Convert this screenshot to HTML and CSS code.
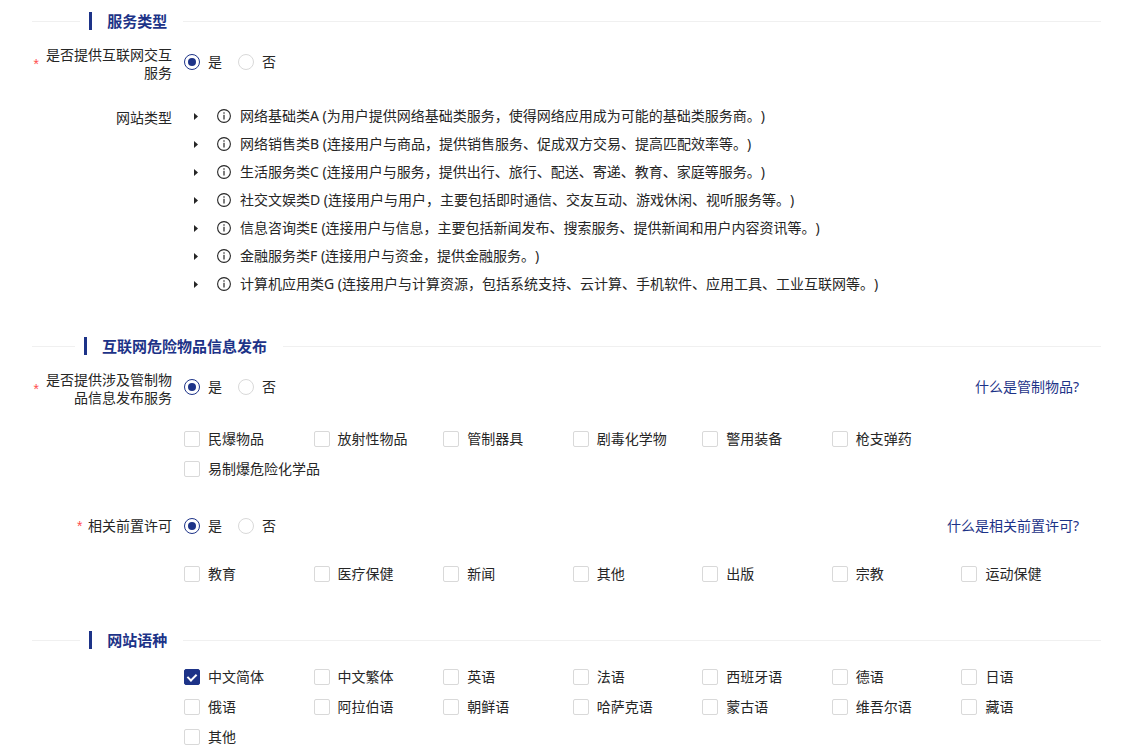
FILE: index.html
```html
<!DOCTYPE html>
<html lang="zh-CN">
<head>
  <meta charset="UTF-8">
  <meta name="viewport" content="width=device-width, initial-scale=1">
  <title>服务类型</title>
  <link rel="stylesheet" href="styles.css">
</head>
<body>
  <svg class="sprite" aria-hidden="true">
    <symbol id="caret" viewBox="0 0 4 7"><path d="M0 0 L4 3.5 L0 7 Z"/></symbol>
    <symbol id="info" viewBox="0 0 14 14">
      <circle cx="7" cy="7" r="6.4" fill="none" stroke="currentColor" stroke-width="1.1"/>
      <rect x="6.4" y="5.8" width="1.2" height="4.7"/>
      <circle cx="7" cy="4" r="0.8"/>
    </symbol>
  </svg>

  <form class="form">
    <section class="section">
      <h2 class="divider"><span class="divider-text">服务类型</span></h2>
      <div class="form-item" role="radiogroup" aria-labelledby="interactive-label">
        <div class="form-label" id="interactive-label"><span class="required">*</span><span>是否提供互联网交互服务</span></div>
        <div class="form-control">
          <label class="option"><input type="radio" name="interactive" checked>是</label>
          <label class="option"><input type="radio" name="interactive">否</label>
        </div>
      </div>
      <div class="form-item">
        <div class="form-label" id="type-label"><span>网站类型</span></div>
        <ul class="tree" aria-labelledby="type-label">
          <li><button type="button" class="switcher" aria-label="展开"><svg class="caret"><use href="#caret"/></svg></button><svg class="info"><use href="#info"/></svg><span>网络基础类A (为用户提供网络基础类服务，使得网络应用成为可能的基础类服务商。)</span></li>
          <li><button type="button" class="switcher" aria-label="展开"><svg class="caret"><use href="#caret"/></svg></button><svg class="info"><use href="#info"/></svg><span>网络销售类B (连接用户与商品，提供销售服务、促成双方交易、提高匹配效率等。)</span></li>
          <li><button type="button" class="switcher" aria-label="展开"><svg class="caret"><use href="#caret"/></svg></button><svg class="info"><use href="#info"/></svg><span>生活服务类C (连接用户与服务，提供出行、旅行、配送、寄递、教育、家庭等服务。)</span></li>
          <li><button type="button" class="switcher" aria-label="展开"><svg class="caret"><use href="#caret"/></svg></button><svg class="info"><use href="#info"/></svg><span>社交文娱类D (连接用户与用户，主要包括即时通信、交友互动、游戏休闲、视听服务等。)</span></li>
          <li><button type="button" class="switcher" aria-label="展开"><svg class="caret"><use href="#caret"/></svg></button><svg class="info"><use href="#info"/></svg><span>信息咨询类E (连接用户与信息，主要包括新闻发布、搜索服务、提供新闻和用户内容资讯等。)</span></li>
          <li><button type="button" class="switcher" aria-label="展开"><svg class="caret"><use href="#caret"/></svg></button><svg class="info"><use href="#info"/></svg><span>金融服务类F (连接用户与资金，提供金融服务。)</span></li>
          <li><button type="button" class="switcher" aria-label="展开"><svg class="caret"><use href="#caret"/></svg></button><svg class="info"><use href="#info"/></svg><span>计算机应用类G (连接用户与计算资源，包括系统支持、云计算、手机软件、应用工具、工业互联网等。)</span></li>
        </ul>
      </div>
    </section>

    <section class="section">
      <h2 class="divider"><span class="divider-text">互联网危险物品信息发布</span></h2>
      <div class="form-item" role="radiogroup" aria-labelledby="controlled-label">
        <div class="form-label" id="controlled-label"><span class="required">*</span><span>是否提供涉及管制物品信息发布服务</span></div>
        <div class="form-control">
          <label class="option"><input type="radio" name="controlled" checked>是</label>
          <label class="option"><input type="radio" name="controlled">否</label>
          <a href="#" class="help">什么是管制物品?</a>
        </div>
      </div>
      <div class="check-group">
        <label class="option"><input type="checkbox">民爆物品</label>
        <label class="option"><input type="checkbox">放射性物品</label>
        <label class="option"><input type="checkbox">管制器具</label>
        <label class="option"><input type="checkbox">剧毒化学物</label>
        <label class="option"><input type="checkbox">警用装备</label>
        <label class="option"><input type="checkbox">枪支弹药</label>
        <label class="option wide"><input type="checkbox">易制爆危险化学品</label>
      </div>
      <div class="form-item" role="radiogroup" aria-labelledby="permit-label">
        <div class="form-label" id="permit-label"><span class="required">*</span><span>相关前置许可</span></div>
        <div class="form-control">
          <label class="option"><input type="radio" name="permit" checked>是</label>
          <label class="option"><input type="radio" name="permit">否</label>
          <a href="#" class="help">什么是相关前置许可?</a>
        </div>
      </div>
      <div class="check-group">
        <label class="option"><input type="checkbox">教育</label>
        <label class="option"><input type="checkbox">医疗保健</label>
        <label class="option"><input type="checkbox">新闻</label>
        <label class="option"><input type="checkbox">其他</label>
        <label class="option"><input type="checkbox">出版</label>
        <label class="option"><input type="checkbox">宗教</label>
        <label class="option"><input type="checkbox">运动保健</label>
      </div>
    </section>

    <section class="section">
      <h2 class="divider"><span class="divider-text">网站语种</span></h2>
      <div class="check-group last">
        <label class="option"><input type="checkbox" checked>中文简体</label>
        <label class="option"><input type="checkbox">中文繁体</label>
        <label class="option"><input type="checkbox">英语</label>
        <label class="option"><input type="checkbox">法语</label>
        <label class="option"><input type="checkbox">西班牙语</label>
        <label class="option"><input type="checkbox">德语</label>
        <label class="option"><input type="checkbox">日语</label>
        <label class="option"><input type="checkbox">俄语</label>
        <label class="option"><input type="checkbox">阿拉伯语</label>
        <label class="option"><input type="checkbox">朝鲜语</label>
        <label class="option"><input type="checkbox">哈萨克语</label>
        <label class="option"><input type="checkbox">蒙古语</label>
        <label class="option"><input type="checkbox">维吾尔语</label>
        <label class="option"><input type="checkbox">藏语</label>
        <label class="option"><input type="checkbox">其他</label>
      </div>
    </section>
  </form>
</body>
</html>
```

FILE: styles.css
```css
*,
*::before,
*::after {
  box-sizing: border-box;
}
body {
  margin: 0;
  background: #fff;
  color: #262626;
  font-family: "Noto Sans", "Noto Sans CJK SC", sans-serif;
  font-size: 14px;
  line-height: 18px;
  text-spacing-trim: space-all;
}
.sprite {
  display: none;
}
.form {
  display: flex;
  flex-direction: column;
  gap: 16px;
  padding: 12px 24px 0 32px;
}
.section {
  display: flex;
  flex-direction: column;
}

/* section title with a rule on both sides */
.divider {
  display: flex;
  align-items: center;
  margin: 0 0 16px;
  font-size: 15px;
  font-weight: 700;
  color: #1d3388;
  white-space: nowrap;
}
.divider::before,
.divider::after {
  content: "";
  width: 5%;
  border-top: 1px solid #f0f0f0;
}
.divider::after {
  width: 95%;
}
.divider-text {
  margin: 0 16px 0 9px;
  padding-left: 15px;
  border-left: 3px solid #1d3388;
}

.form-item {
  display: flex;
  gap: 12px;
  margin-bottom: 20px;
}
.form-label {
  display: flex;
  align-items: center;
  justify-content: flex-end;
  gap: 4px;
  width: 140px;
  height: fit-content;
  min-height: 32px;
  text-align: right;
}
.required {
  padding-top: 4px;
  color: #ff4d4f;
  font-family: "Liberation Mono", monospace;
}
.form-control {
  display: flex;
  flex: 1;
  align-items: center;
  gap: 16px;
  height: 32px;
  padding-right: 22px;
}
.help {
  margin-left: auto;
  color: #1d3388;
  text-decoration: none;
}

.option {
  display: flex;
  align-items: center;
  gap: 8px;
  white-space: nowrap;
  cursor: pointer;
}
input {
  appearance: none;
  display: grid;
  place-items: center;
  flex: none;
  width: 16px;
  height: 16px;
  margin: 0;
  border: 1px solid #d9d9d9;
  border-radius: 2px;
  background: #fff;
  cursor: pointer;
}
input[type="radio"] {
  border-radius: 50%;
}
input:checked {
  border-color: #1d3388;
}
input[type="radio"]:checked::after {
  content: "";
  width: 8px;
  height: 8px;
  border-radius: 50%;
  background: #1d3388;
}
input[type="checkbox"]:checked {
  background: #1d3388;
}
input[type="checkbox"]:checked::after {
  content: "";
  width: 6px;
  height: 9px;
  margin-bottom: 2px;
  border: solid #fff;
  border-width: 0 2px 2px 0;
  transform: rotate(45deg);
}

.check-group {
  display: grid;
  grid-template-columns: repeat(7, 1fr);
  grid-auto-rows: 24px;
  row-gap: 6px;
  margin: 0 10px 29px 152px;
}
/* too long for one column, so it starts the next row */
.wide {
  grid-column: span 2;
}
.last {
  margin-bottom: 0;
}

.tree {
  margin: 0 0 3px;
  padding: 0;
  list-style: none;
}
.tree li {
  display: flex;
  align-items: center;
  gap: 9px;
  min-height: 28px;
}
.switcher {
  display: flex;
  align-items: center;
  justify-content: center;
  width: 24px;
  height: 24px;
  padding: 0;
  border: none;
  background: none;
  color: #262626;
  cursor: pointer;
}
.caret {
  width: 4px;
  height: 7px;
  fill: currentColor;
}
.info {
  flex: none;
  width: 14px;
  height: 14px;
  fill: currentColor;
}
```
